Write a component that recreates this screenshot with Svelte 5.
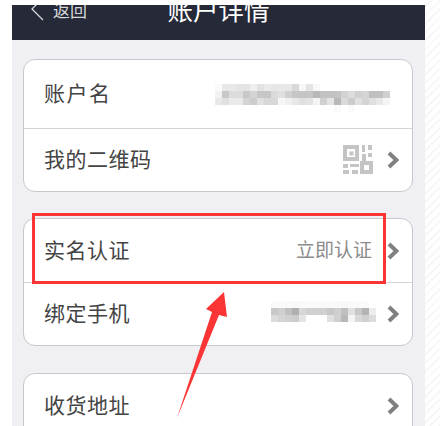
<script lang="ts">
    const accountBlur = [
        'fa e8 e8 e4 e4 ee e2 ea e6 e8 e8 d8 f6 e4 f8 ff ff ff ff ff ff ff ff ff ff',
        'f2 c8 dc dc c8 d4 c6 c6 da e0 d0 c6 c6 c6 b8 c2 c2 c4 d2 dc d0 d4 c0 c0 d0',
        'e8 e0 ea ea d4 cc e0 d8 d8 f6 f0 e8 e0 e4 f4 d0 e4 b8 da cc e0 d4 e0 e8 f4',
        'ff ff ff ff ff ff ff ff ff ff ff ff ff ff ff ff ff fa ff fa ff ff ff ff ff'
    ];
    const phoneBlur = [
        'fa fa fa f8 fa fa fa fa fa fa f8 fa fa fa ff ff',
        'c8 d0 c0 b0 d8 d0 d0 d0 c8 d0 c0 e0 c8 b4 ec ff',
        'dc d4 d0 cc e4 ff ff ff e0 d0 b8 f4 d8 d0 dc ff'
    ];

    const parse = (rows: string[]) => rows.map((row) => row.split(' '));
</script>

{#snippet chevron()}
    <svg class="chevron" width="12" height="18" viewBox="0 0 12 18">
        <path d="M2 2 L9.4 9 L2 16" fill="none" stroke="#808080" stroke-width="4" />
    </svg>
{/snippet}

{#snippet blur(rows: string[], kind: string)}
    <div class="blur {kind}">
        {#each parse(rows) as row}
            <div class="blur-row">
                {#each row as shade}
                    <span style="background: #{shade}{shade.slice(0, 2)}{shade.slice(0, 2)}"></span>
                {/each}
            </div>
        {/each}
    </div>
{/snippet}

<div class="page">
    <div class="screen">
        <header>
            <div class="back">
                <svg width="14" height="24" viewBox="0 0 14 24">
                    <path d="M13 1 L2 12 L13 23" fill="none" stroke="#d6d7da" stroke-width="1.3" />
                </svg>
                <span>返回</span>
            </div>
            <h1>账户详情</h1>
        </header>

        <section class="card first">
            <div class="row tall">
                <span class="label wide">账户名</span>
                {@render blur(accountBlur, 'account')}
            </div>
            <div class="row">
                <span class="label">我的二维码</span>
                <svg class="qr" width="30" height="30" viewBox="0 0 30 30">
                    <g fill="#c4c4c4">
                        <path fill-rule="evenodd" d="M0 0h16v16H0z M4 4v8h8V4z" />
                        <rect x="6.5" y="6.5" width="4" height="4" />
                        <rect x="19" y="0" width="3" height="7" />
                        <rect x="25" y="0" width="4" height="5" />
                        <rect x="19" y="9" width="4" height="7" />
                        <rect x="25" y="8" width="4" height="4" />
                        <rect x="0" y="19" width="5" height="4" />
                        <rect x="7" y="19" width="9" height="3" />
                        <rect x="0" y="25" width="6" height="4" />
                        <rect x="9" y="25" width="6" height="4" />
                        <path fill-rule="evenodd" d="M17 16h13v13H17z M21 20v5h5v-5z" />
                    </g>
                </svg>
                {@render chevron()}
            </div>
        </section>

        <section class="card second">
            <div class="row">
                <span class="label">实名认证</span>
                <span class="value">立即认证</span>
                {@render chevron()}
            </div>
            <div class="row">
                <span class="label">绑定手机</span>
                {@render blur(phoneBlur, 'phone')}
                {@render chevron()}
            </div>
        </section>

        <section class="card third">
            <div class="row">
                <span class="label">收货地址</span>
                <span class="spacer"></span>
                {@render chevron()}
            </div>
        </section>
    </div>
    <div class="hatch"></div>

    <!-- annotation drawn on top of the screenshot -->
    <div class="highlight"></div>
    <svg class="arrow" width="60" height="133" viewBox="0 0 60 133">
        <path d="M48 0 L30 17 L36 20 L1 126 L43 23 L51 25 Z" fill="#fb3535" />
    </svg>
</div>

<style>
    :global(body) {
        background: #fff;
    }

    .page {
        position: relative;
        display: flex;
        width: 440px;
        height: 426px;
        overflow: hidden;
        padding-left: 12px;
        box-sizing: border-box;
        font-family: "Noto Sans CJK SC", "Liberation Sans", sans-serif;
    }

    .screen {
        width: 413px;
        margin-top: 5px;
        background: #efeff4;
    }

    .hatch {
        flex: 1;
        background: repeating-linear-gradient(135deg, #fff 0 4px, #f7f7f7 4px 6px);
    }

    header {
        display: flex;
        justify-content: center;
        position: relative;
        height: 35px;
        overflow: hidden;
        background: #252938;
    }

    h1 {
        margin: -14px 0 0;
        font-size: 25.5px;
        font-weight: 400;
        line-height: 36px;
        color: #fff;
    }

    .back {
        position: absolute;
        left: 18px;
        top: -9px;
        display: flex;
        align-items: center;
        gap: 9px;
        font-size: 17px;
        line-height: 24px;
        color: #d6d7da;
    }

    .back span {
        margin-top: 2px;
    }

    .card {
        margin: 0 12px 0 11px;
        border: 1px solid #c8c8cc;
        border-radius: 12px;
        background: #fff;
    }

    .first {
        margin-top: 19px;
    }

    .second {
        margin-top: 26px;
    }

    .third {
        margin-top: 27px;
        height: 100px;
    }

    .row {
        display: flex;
        align-items: center;
        height: 63px;
        padding: 0 13px 0 20px;
    }

    .row.tall {
        height: 68px;
    }

    .row + .row {
        height: 62px;
        border-top: 1px solid #d4d4d6;
    }

    .label {
        margin-bottom: 4px;
        font-size: 21px;
        letter-spacing: 0.5px;
        color: #444;
    }

    .label.wide {
        letter-spacing: 1.5px;
    }

    .value {
        margin-left: auto;
        margin-right: 15px;
        margin-bottom: 4px;
        font-size: 19px;
        color: #8c8c8c;
    }

    .chevron {
        flex: none;
    }

    .qr {
        margin-left: auto;
        margin-right: 14px;
    }

    .spacer {
        flex: 1;
    }

    .blur {
        margin-left: auto;
    }

    .blur.account {
        margin-top: 7px;
        margin-right: 9px;
    }

    .blur.phone {
        margin-bottom: 5px;
        margin-right: 4px;
    }

    .blur-row {
        display: flex;
    }

    .blur-row span {
        width: 7px;
        height: 7px;
    }

    .highlight {
        position: absolute;
        left: 32px;
        top: 213px;
        width: 348px;
        height: 65px;
        border: 3px solid #fb3535;
    }

    .arrow {
        position: absolute;
        left: 176px;
        top: 292px;
    }
</style>
